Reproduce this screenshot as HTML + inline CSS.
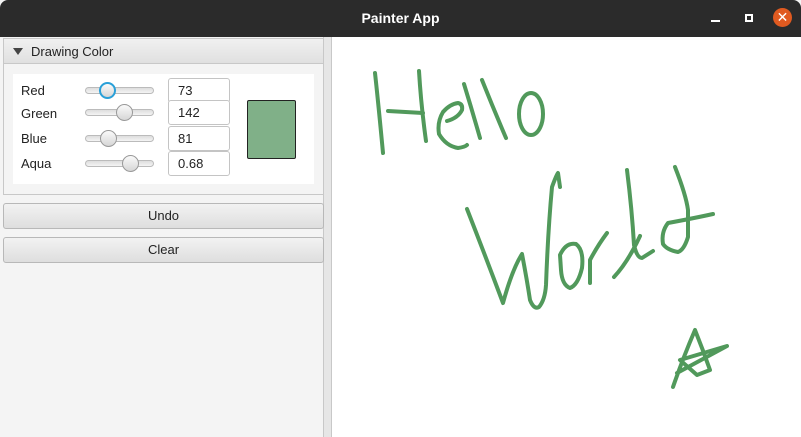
<!DOCTYPE html>
<html><head><style>
*{box-sizing:border-box;margin:0;padding:0}
body{width:801px;height:437px;overflow:hidden;background:#f4f4f4;font-family:"Liberation Sans","DejaVu Sans",sans-serif;font-size:13px;color:#222;position:relative}
.abs{position:absolute}
.title{left:0;top:0;width:801px;height:37px;background:#2b2b2b;border-radius:8px 8px 0 0;color:#fff;font-weight:bold;font-size:14px;text-align:center;line-height:37px}
.pane{left:3px;top:38px;width:321px;height:157px;border:1px solid #c8c8c8;background:#f4f4f4}
.hdr{left:0;top:0;width:319px;height:25px;background:linear-gradient(#f0f0f0,#e0e0e0);border-bottom:1px solid #c8c8c8;line-height:25px;padding-left:27px;font-size:13px}
.tri{left:9px;top:9px;width:0;height:0;border-left:5px solid transparent;border-right:5px solid transparent;border-top:7px solid #444}
.box{left:9px;top:35px;width:301px;height:110px;background:#fff}
.lbl{left:21px;font-size:13px}
.track{left:85px;width:69px;height:7px;border:1px solid #bbb;border-radius:4px;background:linear-gradient(#ddd,#f4f4f4)}
.knob{width:17px;height:17px;border-radius:50%;border:1px solid #999;background:linear-gradient(#fafafa,#d6d6d6)}
.tf{left:168px;width:62px;height:25px;border:1px solid #c4c4c4;border-radius:3px;background:#fff;padding-left:9px;line-height:24px;font-size:13px}
.btn{left:3px;width:321px;height:26px;border:1px solid #b8b8b8;border-radius:3px;background:linear-gradient(#f2f2f2,#dedede);text-align:center;line-height:24px;font-size:13px}
</style></head><body>
<div class="abs title">Painter App</div>
<div class="abs" style="left:711px;top:20px;width:9px;height:2px;background:#fff"></div>
<div class="abs" style="left:745px;top:14px;width:8px;height:8px;border:2px solid #fff"></div>
<div class="abs" style="left:773px;top:8px;width:19px;height:19px;border-radius:50%;background:#e05a20;color:#fff;font-weight:bold;font-size:14px;text-align:center;line-height:19px">✕</div>

<div class="abs" style="left:323px;top:37px;width:9px;height:400px;background:#e6e6e6;border-left:1px solid #c8c8c8;border-right:1px solid #c8c8c8"></div>
<div class="abs" style="left:332px;top:37px;width:469px;height:400px;background:#fff"></div>

<div class="abs pane">
 <div class="abs hdr">Drawing Color</div>
 <div class="abs tri"></div>
 <div class="abs box"></div>
</div>
<div class="abs lbl" style="top:83px">Red</div>
<div class="abs lbl" style="top:106px">Green</div>
<div class="abs lbl" style="top:131px">Blue</div>
<div class="abs lbl" style="top:156px">Aqua</div>
<div class="abs track" style="top:87px"></div>
<div class="abs track" style="top:109px"></div>
<div class="abs track" style="top:135px"></div>
<div class="abs track" style="top:160px"></div>
<div class="abs knob" style="left:99px;top:82px;border:2px solid #2aa0d8"></div>
<div class="abs knob" style="left:116px;top:104px"></div>
<div class="abs knob" style="left:100px;top:130px"></div>
<div class="abs knob" style="left:122px;top:155px"></div>
<div class="abs tf" style="top:78px">73</div>
<div class="abs tf" style="top:100px">142</div>
<div class="abs tf" style="top:126px">81</div>
<div class="abs tf" style="top:151px">0.68</div>
<div class="abs" style="left:247px;top:100px;width:49px;height:59px;border:1px solid #222;border-radius:2px;background:#80b088"></div>

<div class="abs btn" style="top:203px">Undo</div>
<div class="abs btn" style="top:237px">Clear</div>

<svg class="abs" style="left:0;top:0" width="801" height="437">
<g fill="none" stroke="#3f8f4a" stroke-width="4" stroke-linecap="round" stroke-linejoin="round" opacity="0.9">
<path d="M375,73 Q378,100 383,153"/>
<path d="M388,111 L423,113"/>
<path d="M419,71 Q421,105 426,141"/>
<path d="M447,121 Q458,118 462,110 Q463,104 458,103 Q450,104 443,112 Q437,122 439,134 Q446,146 458,148 Q465,147 467,145"/>
<path d="M464,84 Q472,110 480,138"/>
<path d="M482,80 Q494,110 506,138"/>
<ellipse cx="531" cy="114" rx="12" ry="21"/>
<path d="M467,209 Q485,255 503,303 Q512,270 522,254 Q527,280 530,300 Q534,310 539,307 Q545,300 546,285 Q548,230 552,187 Q556,176 558,173 L560,187"/>
<path d="M560,255 Q566,242 576,244 Q584,250 582,268 Q578,285 570,288 Q562,285 561,270 Z"/>
<path d="M590,283 L590,260 Q598,245 607,233"/>
<path d="M627,170 Q632,210 634,245 Q637,258 642,258 L653,251"/>
<path d="M614,277 Q628,262 640,236"/>
<path d="M675,167 Q686,195 688,210 L688,237 Q684,250 678,252 Q667,250 663,244 Q661,232 668,223 Q695,218 713,214"/>
<path d="M673,387 Q683,358 695,330 Q703,350 710,370 L697,375 L680,360 L727,346 L677,373"/>
</g>
</svg>
</body></html>
